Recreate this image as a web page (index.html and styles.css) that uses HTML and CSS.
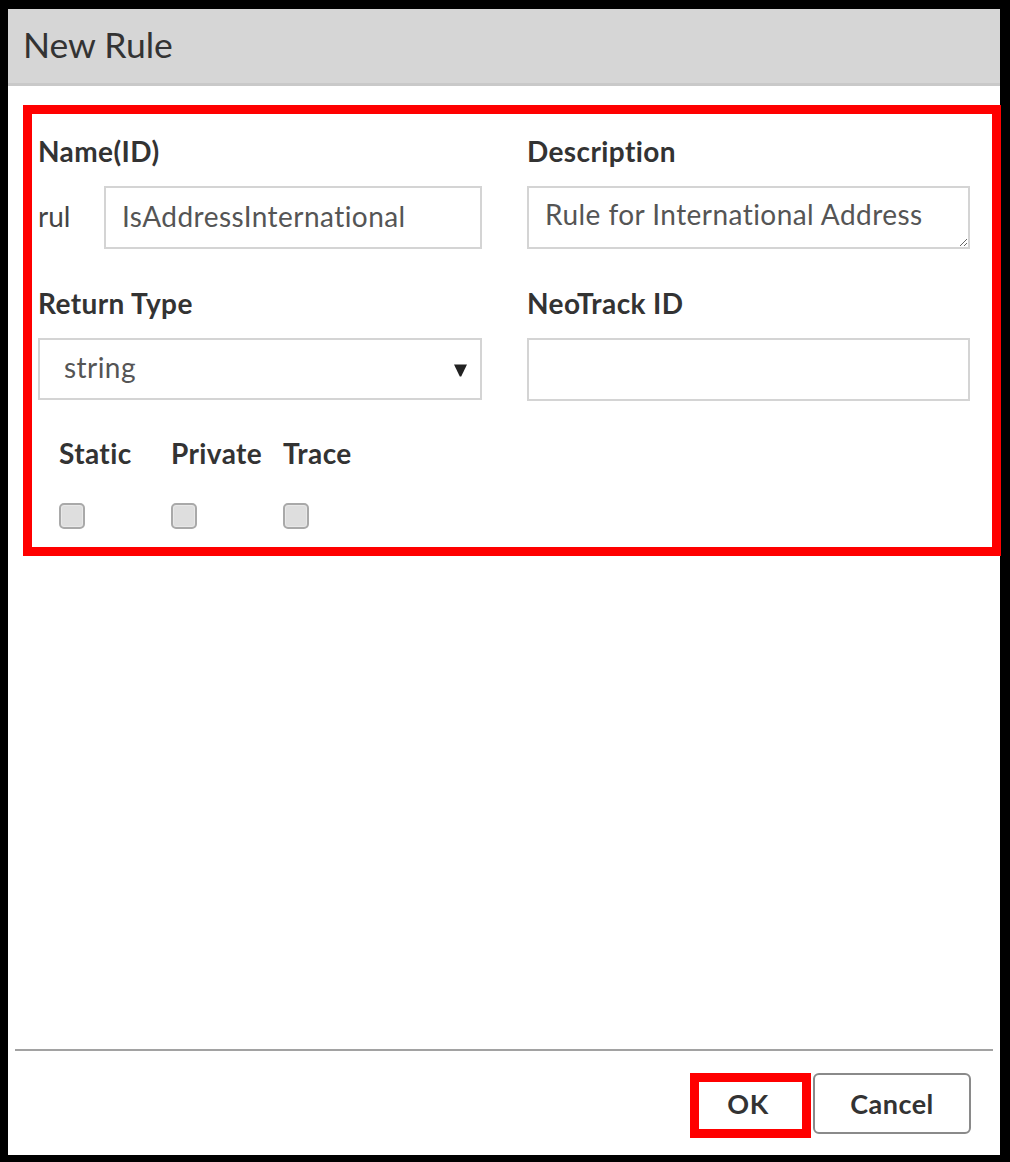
FILE: index.html
```html
<!DOCTYPE html>
<html lang="en">
<head>
<meta charset="utf-8">
<title>New Rule</title>
<link rel="stylesheet" href="styles.css">
</head>
<body>
<div class="frame">
  <header class="header"><h1 class="title">New Rule</h1></header>
  <main class="body">
    <section class="form-box">
      <div class="form-grid">
        <div class="field">
          <label class="label">Name(ID)</label>
          <div class="name-row">
            <span class="prefix">rul</span>
            <input class="control" type="text" value="IsAddressInternational">
          </div>
        </div>
        <div class="field">
          <label class="label">Description</label>
          <textarea class="control area">Rule for International Address</textarea>
        </div>
        <div class="field">
          <label class="label">Return Type</label>
          <div class="control select">
            <span>string</span>
            <svg class="arrow" width="13" height="13" viewBox="0 0 13 13"><path d="M0 0.5 H13 L7.2 12.5 H5.8 Z" fill="#222"/></svg>
          </div>
        </div>
        <div class="field">
          <label class="label">NeoTrack ID</label>
          <input class="control" type="text" value="">
        </div>
      </div>
      <div class="checks">
        <div class="check"><span class="label">Static</span><input type="checkbox" class="cb"></div>
        <div class="check"><span class="label">Private</span><input type="checkbox" class="cb"></div>
        <div class="check"><span class="label">Trace</span><input type="checkbox" class="cb"></div>
      </div>
    </section>
  </main>
  <footer class="footer">
    <div class="ok-wrap"><button class="btn ok">OK</button></div>
    <button class="btn">Cancel</button>
  </footer>
</div>
</body>
</html>
```

FILE: styles.css
```css
*, *::before, *::after { box-sizing: border-box; }
html, body { margin: 0; padding: 0; background: #000; }
body { font-family: Lato, "Open Sans", "Liberation Sans", sans-serif; color: #333; }

.frame {
  width: 1010px;
  height: 1162px;
  border-style: solid;
  border-color: #000;
  border-width: 9px 10px 7px 8px;
  background: #fff;
  display: flex;
  flex-direction: column;
}

.header {
  height: 77px;
  background: #d6d6d6;
  border-bottom: 3px solid #c9c9c9;
  padding: 14px 0 0 15px;
}
.title {
  margin: 0;
  font-size: 35.5px;
  line-height: 43px;
  font-weight: 400;
  color: #333;
}

.body { flex: 1; }

.form-box {
  margin: 19px 0 0 15px;
  width: 978px;
  height: 451px;
  border: 9px solid #ff0000;
  padding: 22px 22px 0 6px;
}

.form-grid {
  display: grid;
  grid-template-columns: 444px 443px;
  column-gap: 45px;
  row-gap: 39px;
}

.field { display: flex; flex-direction: column; }

.label {
  display: block;
  font-size: 28px;
  line-height: 30px;
  font-weight: 700;
  letter-spacing: 0.4px;
  color: #333;
  white-space: nowrap;
}
.field .label { margin-bottom: 20px; }

.name-row { display: flex; align-items: center; }
.prefix {
  width: 66px;
  flex: none;
  font-size: 28px;
  color: #444;
  padding-bottom: 4px;
}

.control {
  width: 100%;
  height: 63px;
  border: 2px solid #d4d4d4;
  background: #fff;
  font-family: inherit;
  font-size: 28px;
  letter-spacing: 0.45px;
  color: #555;
  padding: 0 0 4px 16px;
  outline: none;
  margin: 0;
  border-radius: 0;
}
.area {
  resize: both;
  overflow: hidden;
  padding: 11px 0 0 16px;
  line-height: 31px;
}

.select {
  display: flex;
  align-items: center;
  justify-content: space-between;
  height: 62px;
  padding: 0 13px 5px 24px;
}
.arrow { display: block; margin-top: 7px; }

.checks {
  display: grid;
  grid-template-columns: 112px 112px 112px;
  margin: 37px 0 0 21px;
}
.check { display: flex; flex-direction: column; align-items: flex-start; gap: 35px; }
.cb {
  appearance: none;
  -webkit-appearance: none;
  width: 26px;
  height: 26px;
  margin: 0;
  border: 2px solid #a9a9a9;
  border-radius: 5px;
  background: #dedede;
  box-shadow: inset 0 0 0 1px #e8e8e8;
}

.footer {
  margin: 0 7px;
  border-top: 2px solid #a2a2a2;
  padding: 22px 22px 21px 0;
  display: flex;
  justify-content: flex-end;
  gap: 7px;
}

.btn {
  height: 61px;
  border: 2px solid #8a8a8a;
  border-radius: 6px;
  background: #fff;
  font-family: inherit;
  font-size: 27px;
  font-weight: 700;
  letter-spacing: 0.5px;
  color: #333;
  padding: 0;
  width: 158px;
}
.ok-wrap { position: relative; }
.btn.ok { width: 116px; }
.ok-wrap::after {
  content: "";
  position: absolute;
  left: 0;
  top: 0;
  width: 121px;
  height: 65px;
  border: 9px solid #ff0000;
  pointer-events: none;
}
```
